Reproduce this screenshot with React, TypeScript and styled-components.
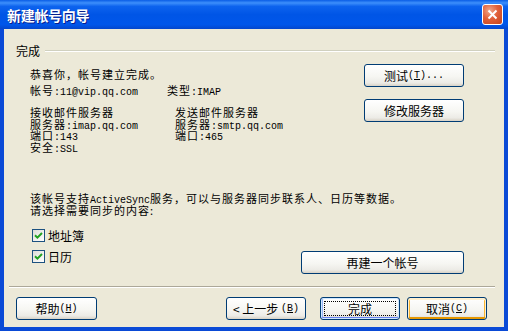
import styled, { createGlobalStyle } from 'styled-components';

const GlobalStyle = createGlobalStyle`
  html, body {
    margin: 0;
    padding: 0;
    background: #ece9d8;
  }
  body {
    font-family: "Noto Sans CJK SC", sans-serif;
    font-size: 12px;
    color: #000;
  }
`;

const Window = styled.div`
  width: 508px;
  height: 331px;
  display: flex;
  flex-direction: column;
  overflow: hidden;
`;

const TitleBar = styled.div`
  height: 29px;
  flex: none;
  display: flex;
  align-items: center;
  justify-content: space-between;
  padding: 0 5px 0 7px;
  background: linear-gradient(
    to bottom,
    #0a5de6 0%,
    #3d8ffb 10%,
    #0d63ee 22%,
    #0055e6 50%,
    #0056ea 85%,
    #0446cc 100%
  );
`;

const Title = styled.span`
  font-size: 14px;
  font-weight: bold;
  color: #fff;
  text-shadow: 1px 1px 0 #0a1e8c;
  letter-spacing: -0.3px;
`;

const CloseButton = styled.div`
  width: 19px;
  height: 19px;
  border: 1px solid #fff;
  border-radius: 3px;
  background: radial-gradient(circle at 35% 30%, #f0a88c 0%, #e1603a 45%, #c3431c 100%);
  display: flex;
  align-items: center;
  justify-content: center;
`;

const Body = styled.div`
  flex: 1;
  min-height: 0;
  display: flex;
  flex-direction: column;
  background: #ece9d8;
  border: 4px solid #0a4ad6;
  border-top: none;
`;

const GroupHeader = styled.div`
  display: flex;
  align-items: center;
  margin: 16px 9px 0 12px;
  height: 12px;
  line-height: 12px;
`;

const GroupLine = styled.div`
  flex: 1;
  margin-left: 5px;
  border-top: 1px solid #d0d0bf;
  border-bottom: 1px solid #fff;
`;

const TopSection = styled.div`
  display: flex;
  margin-top: 7px;
  padding-left: 26px;
`;

const Info = styled.div`
  width: 334px;
  padding-top: 4px;
`;

const Line = styled.div<{ $h?: number }>`
  height: ${(p) => p.$h ?? 12}px;
  line-height: ${(p) => p.$h ?? 12}px;
  font-size: 11px;
  letter-spacing: 1px;
  white-space: nowrap;
  overflow: visible;
`;

const Pair = styled.div<{ $first: number; $gap?: number }>`
  display: grid;
  grid-template-columns: ${(p) => p.$first}px auto;
  margin-top: ${(p) => p.$gap ?? 0}px;
`;

const Latin = styled.span`
  font-family: "Liberation Mono", monospace;
  font-size: 10px;
  letter-spacing: 0;
  line-height: 0;
`;

const ButtonColumn = styled.div`
  display: flex;
  flex-direction: column;
  gap: 12px;
`;

const Button = styled.div<{ $w: number; $state?: 'default' | 'hover' }>`
  position: relative;
  box-sizing: border-box;
  width: ${(p) => p.$w}px;
  height: 23px;
  flex: none;
  border: 1px solid #003c74;
  border-radius: 3px;
  background: linear-gradient(to bottom, #ffffff 0%, #f6f6f2 55%, #ecebe6 85%, #d8d2c6 100%);
  display: flex;
  align-items: center;
  justify-content: center;
  line-height: 12px;
  white-space: nowrap;
  box-shadow: ${(p) =>
    p.$state === 'default'
      ? 'inset 0 0 0 1px #cee7ff, inset 0 -1px 0 1px #6982ee, inset 1px 0 0 1px #9bb5f5'
      : p.$state === 'hover'
        ? 'inset 0 1px 0 1px #fff0cf, inset 0 -1px 0 1px #e59700, inset 0 0 0 2px #f8b636'
        : 'none'};

  ${(p) =>
    p.$state === 'default' &&
    `&::after {
      content: '';
      position: absolute;
      inset: 3px;
      border: 1px dotted #000;
    }`}
`;

const Key = styled.span`
  font-family: "Liberation Mono", monospace;
  font-size: 10px;
  u {
    text-decoration: underline;
  }
`;

const SyncSection = styled.div`
  margin-top: 39px;
  padding: 0 40px 0 26px;
`;

const CheckRow = styled.div`
  display: flex;
  margin-top: 13px;
`;

const CheckList = styled.div`
  display: flex;
  flex-direction: column;
  gap: 8px;
  margin-left: 2px;
`;

const CheckItem = styled.div`
  display: flex;
  align-items: center;
  gap: 3px;
  height: 13px;
  line-height: 12px;
  font-size: 12px;
`;

const Box = styled.div`
  box-sizing: border-box;
  width: 13px;
  height: 13px;
  border: 1px solid #1c5180;
  background: linear-gradient(135deg, #dcdcd7 0%, #ffffff 100%);
  display: flex;
  align-items: center;
  justify-content: center;
`;

const RightButton = styled.div`
  margin-left: auto;
  margin-top: 22px;
`;

const Separator = styled.div`
  margin: 12px 9px 0 5px;
  border-top: 1px solid #aca899;
  border-bottom: 1px solid #fff;
`;

const Footer = styled.div`
  display: flex;
  align-items: center;
  margin-top: 9px;
  padding: 0 17px 0 12px;
`;

const Spacer = styled.div`
  flex: 1;
`;

const Gap = styled.div<{ $w: number }>`
  width: ${(p) => p.$w}px;
`;

function Check({ label }: { label: string }) {
  return (
    <CheckItem>
      <Box>
        <svg width="9" height="9" viewBox="0 0 9 9">
          <path d="M1 4.2 L3.4 6.6 L8 2" stroke="#21a121" strokeWidth="2" fill="none" />
        </svg>
      </Box>
      {label}
    </CheckItem>
  );
}

export default function App() {
  return (
    <>
      <GlobalStyle />
      <Window>
        <TitleBar>
          <Title>新建帐号向导</Title>
          <CloseButton>
            <svg width="11" height="11" viewBox="0 0 11 11">
              <path d="M1.5 1.5 L9.5 9.5 M9.5 1.5 L1.5 9.5" stroke="#fff" strokeWidth="2" />
            </svg>
          </CloseButton>
        </TitleBar>
        <Body>
          <GroupHeader>
            完成
            <GroupLine />
          </GroupHeader>

          <TopSection>
            <Info>
              <Line>恭喜你，帐号建立完成。</Line>
              <Pair $first={137} $gap={4}>
                <Line>
                  帐号<Latin>:11@vip.qq.com</Latin>
                </Line>
                <Line>
                  类型<Latin>:IMAP</Latin>
                </Line>
              </Pair>
              <Pair $first={145} $gap={11}>
                <div>
                  <Line $h={11.5}>接收邮件服务器</Line>
                  <Line $h={11.5}>
                    服务器<Latin>:imap.qq.com</Latin>
                  </Line>
                  <Line $h={11.5}>
                    端口<Latin>:143</Latin>
                  </Line>
                  <Line $h={11.5}>
                    安全<Latin>:SSL</Latin>
                  </Line>
                </div>
                <div>
                  <Line $h={11.5}>发送邮件服务器</Line>
                  <Line $h={11.5}>
                    服务器<Latin>:smtp.qq.com</Latin>
                  </Line>
                  <Line $h={11.5}>
                    端口<Latin>:465</Latin>
                  </Line>
                </div>
              </Pair>
            </Info>
            <ButtonColumn>
              <Button $w={100}>
                测试
                <Key>
                  (<u>T</u>)...
                </Key>
              </Button>
              <Button $w={100}>修改服务器</Button>
            </ButtonColumn>
          </TopSection>

          <SyncSection>
            <Line>
              该帐号支持<Latin>ActiveSync</Latin>服务，可以与服务器同步联系人、日历等数据。
            </Line>
            <Line>请选择需要同步的内容:</Line>
            <CheckRow>
              <CheckList>
                <Check label="地址簿" />
                <Check label="日历" />
              </CheckList>
              <RightButton>
                <Button $w={163}>再建一个帐号</Button>
              </RightButton>
            </CheckRow>
          </SyncSection>

          <Separator />

          <Footer>
            <Button $w={81}>
              帮助
              <Key>
                (<u>H</u>)
              </Key>
            </Button>
            <Spacer />
            <Button $w={80}>
              &lt; 上一步&nbsp;
              <Key>
                (<u>B</u>)
              </Key>
            </Button>
            <Gap $w={14} />
            <Button $w={80} $state="default">
              完成
            </Button>
            <Gap $w={7} />
            <Button $w={80} $state="hover">
              取消
              <Key>
                (<u>C</u>)
              </Key>
            </Button>
          </Footer>
        </Body>
      </Window>
    </>
  );
}
